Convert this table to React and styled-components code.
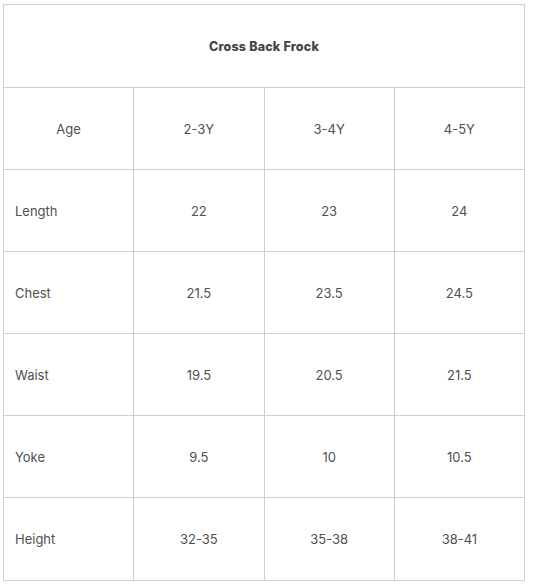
import React from 'react';
import styled, { createGlobalStyle } from 'styled-components';

const GlobalStyle = createGlobalStyle`
  body {
    margin: 0;
    background: #fff;
    font-family: 'Inter', 'Liberation Sans', sans-serif;
  }
`;

const Page = styled.div`
  padding: 4px 0 0 3px;
`;

const Table = styled.table`
  width: 522px;
  border-collapse: collapse;
  table-layout: fixed;
  color: #505050;
  font-size: 13px;
`;

const TitleCell = styled.th`
  height: 82px;
  padding: 0;
  border: 1px solid #cfcfcf;
  font-weight: 800;
  font-size: 12.5px;
  color: #444;
  letter-spacing: 0.2px;
  text-align: center;
`;

const Cell = styled.td`
  height: 81px;
  border: 1px solid #cfcfcf;
  padding: 0 11px;
  text-align: ${p => (p.$left ? 'left' : 'center')};
  vertical-align: middle;
`;

const LastCell = styled(Cell)`
  height: 82px;
`;

const rows = [
  ['Length', '22', '23', '24'],
  ['Chest', '21.5', '23.5', '24.5'],
  ['Waist', '19.5', '20.5', '21.5'],
  ['Yoke', '9.5', '10', '10.5'],
];

const App = () => (
  <>
    <GlobalStyle />
    <Page>
      <Table>
        <thead>
          <tr>
            <TitleCell colSpan={4}>Cross Back Frock</TitleCell>
          </tr>
        </thead>
        <tbody>
          <tr>
            <Cell>Age</Cell>
            <Cell>2-3Y</Cell>
            <Cell>3-4Y</Cell>
            <Cell>4-5Y</Cell>
          </tr>
          {rows.map(r => (
            <tr key={r[0]}>
              <Cell $left>{r[0]}</Cell>
              {r.slice(1).map((v, i) => (
                <Cell key={i}>{v}</Cell>
              ))}
            </tr>
          ))}
          <tr>
            <LastCell $left>Height</LastCell>
            <LastCell>32-35</LastCell>
            <LastCell>35-38</LastCell>
            <LastCell>38-41</LastCell>
          </tr>
        </tbody>
      </Table>
    </Page>
  </>
);

export default App;
